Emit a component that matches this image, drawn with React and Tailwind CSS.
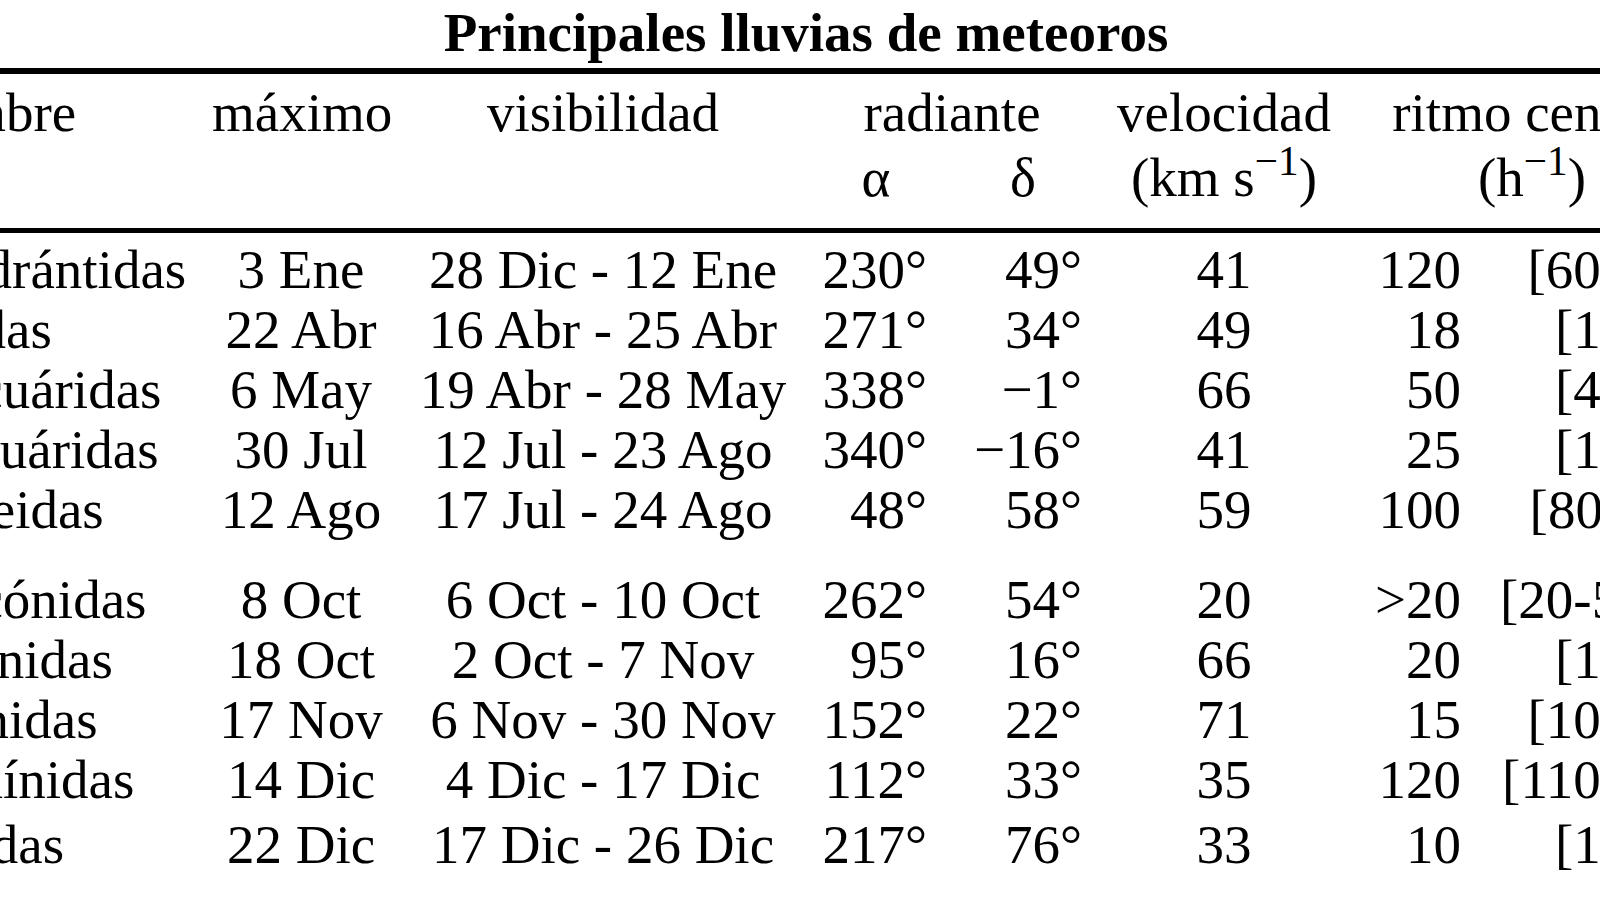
const rows1 = [
  ["Cuadrántidas", "3 Ene", "28 Dic - 12 Ene", "230°", "49°", "41", "120", "[60-200]"],
  ["Líridas", "22 Abr", "16 Abr - 25 Abr", "271°", "34°", "49", "18", "[10-20]"],
  ["η Acuáridas", "6 May", "19 Abr - 28 May", "338°", "−1°", "66", "50", "[40-85]"],
  ["δ Acuáridas", "30 Jul", "12 Jul - 23 Ago", "340°", "−16°", "41", "25", "[16-20]"],
  ["Perseidas", "12 Ago", "17 Jul - 24 Ago", "48°", "58°", "59", "100", "[80-110]"],
];

const rows2 = [
  ["Dracónidas", "8 Oct", "6 Oct - 10 Oct", "262°", "54°", "20", ">20", "[20-5000]"],
  ["Oriónidas", "18 Oct", "2 Oct - 7 Nov", "95°", "16°", "66", "20", "[15-30]"],
  ["Leónidas", "17 Nov", "6 Nov - 30 Nov", "152°", "22°", "71", "15", "[10-500]"],
  ["Gemínidas", "14 Dic", "4 Dic - 17 Dic", "112°", "33°", "35", "120", "[110-140]"],
  ["Úrsidas", "22 Dic", "17 Dic - 26 Dic", "217°", "76°", "33", "10", "[10-50]"],
];

const cols = "grid grid-cols-[316px_178px_426px_120px_174px_228px_137px_259px]";

function Row({ r, className = "" }) {
  return (
    <div className={cols + " " + className}>
      <div className="text-left whitespace-nowrap">{r[0]}</div>
      <div className="text-center whitespace-nowrap">{r[1]}</div>
      <div className="text-center whitespace-nowrap">{r[2]}</div>
      <div className="text-right pr-[9px] whitespace-nowrap">{r[3]}</div>
      <div className="text-right pr-[28px] whitespace-nowrap">{r[4]}</div>
      <div className="text-center whitespace-nowrap">{r[5]}</div>
      <div className="text-right pr-[14px] whitespace-nowrap">{r[6]}</div>
      <div className="text-right pr-[14px] whitespace-nowrap">{r[7]}</div>
    </div>
  );
}

export default function App() {
  return (
    <div className="w-[1600px] h-[900px] overflow-hidden bg-white text-black">
      <div
        className="ml-[-104px] w-[1838px] text-[55px]"
        style={{ fontFamily: '"Liberation Serif", "Times New Roman", serif' }}
      >
        {/* title */}
        <div className="h-[68px] pt-[3px] leading-[60px] text-center font-bold pr-[18px]">
          Principales lluvias de meteoros
        </div>
        <div className="border-t-[6px] border-black" />

        {/* header */}
        <div className="pt-[7px] pb-[17px]">
          <div className={cols + " leading-[63px]"}>
            <div className="text-left">Nombre</div>
            <div className="text-center">máximo</div>
            <div className="text-center">visibilidad</div>
            <div className="col-span-2 text-center pr-[22px]">radiante</div>
            <div className="text-center">velocidad</div>
            <div className="col-span-2 text-center whitespace-nowrap pr-[8px]">ritmo cenital</div>
          </div>
          <div className={cols + " leading-[67px]"}>
            <div />
            <div />
            <div />
            <div className="text-center">α</div>
            <div className="text-center">δ</div>
            <div className="text-center whitespace-nowrap">
              (km s<sup>−1</sup>)
            </div>
            <div className="col-span-2 text-center pr-[8px]">
              (h<sup>−1</sup>)
            </div>
          </div>
        </div>
        <div className="border-t-[5px] border-black" />

        {/* body */}
        <div className="leading-[60px] pt-[7px]">
          {rows1.map((r, i) => (
            <Row key={i} r={r} />
          ))}
          <div className="h-[30px]" />
          {rows2.map((r, i) => (
            <Row key={i} r={r} className={i === rows2.length - 1 ? "pt-[5px]" : ""} />
          ))}
        </div>
      </div>
    </div>
  );
}
